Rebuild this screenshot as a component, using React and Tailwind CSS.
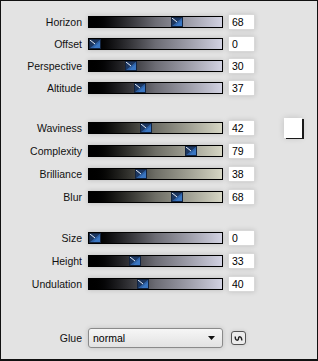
import React from "react";

const font = { fontFamily: '"Liberation Sans", Arial, sans-serif' };

function Thumb() {
  return (
    <svg width="12" height="10" viewBox="0 0 12 10" className="block">
      <rect x="0" y="0" width="12" height="10" fill="#2f62a6" />
      <polygon points="0,0 12,0 0,10" fill="#1c365f" />
      <polygon points="12,2 12,10 3,10" fill="#3a76c2" />
      <line x1="1" y1="1" x2="6" y2="5" stroke="#e6eefa" strokeWidth="1" />
      <rect x="0.5" y="0.5" width="11" height="9" fill="none" stroke="#13243f" strokeWidth="1" />
    </svg>
  );
}

function Slider({ value, beige }) {
  const grad = beige
    ? "bg-linear-to-r from-black via-[#6e6e66] to-[#d6d6c4]"
    : "bg-linear-to-r from-black via-[#6c6c74] to-[#d2d2e2]";
  return (
    <div
      className={`relative ml-[6px] h-3 w-[135px] border border-black shadow-[0_0_5px_rgba(0,0,0,0.18)] ${grad}`}
    >
      <div className="absolute top-0" style={{ left: Math.round((value / 100) * 121) }}>
        <Thumb />
      </div>
    </div>
  );
}

function Row({ label, value, beige, extra }) {
  return (
    <div className="flex h-4 items-center">
      <div className="w-[81px] text-right text-[10.5px] leading-none text-[#111]" style={font}>
        {label}
      </div>
      <Slider value={value} beige={beige} />
      <div
        className="ml-[5px] flex h-4 w-[27px] items-center border border-[#d8d8d8] bg-white pl-[3px] text-[10.5px] leading-none text-black shadow-[0_0_5px_rgba(0,0,0,0.15)]"
        style={font}
      >
        {value}
      </div>
      {extra}
    </div>
  );
}

export default function App() {
  return (
    <div
      className="box-border flex h-[361px] w-[318px] flex-col border border-b-2 border-[#111] bg-[#e3e3e3] pt-[13px]"
      style={font}
    >
      <div className="flex flex-col gap-[6px]">
        <Row label="Horizon" value={68} />
        <Row label="Offset" value={0} />
        <Row label="Perspective" value={30} />
        <Row label="Altitude" value={37} />
      </div>
      <div className="mt-[24px] flex flex-col gap-[7px]">
        <Row
          label="Waviness"
          value={42}
          beige
          extra={
            <div className="ml-[29px] h-[20px] w-[18px] bg-white shadow-[2px_1px_0_#1a1a1a,0_0_6px_rgba(0,0,0,0.15)]" />
          }
        />
        <Row label="Complexity" value={79} beige />
        <Row label="Brilliance" value={38} beige />
        <Row label="Blur" value={68} beige />
      </div>
      <div className="mt-[25px] flex flex-col gap-[7px]">
        <Row label="Size" value={0} />
        <Row label="Height" value={33} />
        <Row label="Undulation" value={40} />
      </div>
      <div className="mt-[36px] flex h-5 items-center">
        <div className="w-[81px] text-right text-[10.5px] leading-none text-[#111]">Glue</div>
        <div className="relative ml-[6px] flex h-5 w-[135px] items-center rounded-[3px] border border-[#8a8a8a] bg-linear-to-b from-[#f6f6f6] to-[#e2e2e2] pl-[4px] text-[10.5px] leading-none text-black shadow-[0_0_5px_rgba(0,0,0,0.15)]">
          normal
          <svg width="7" height="4" viewBox="0 0 7 4" className="absolute right-[7px] top-[7px]">
            <polygon points="0,0 7,0 3.5,4" fill="#111" />
          </svg>
        </div>
        <div className="ml-[8px] flex h-[14px] w-[15px] items-center justify-center rounded-[3px] border border-[#555] bg-[#ececec] shadow-[0_0_4px_rgba(0,0,0,0.12)]">
          <svg width="9" height="7" viewBox="0 0 9 7">
            <path d="M1.2 1.5 C1.2 6 4.5 6 4.5 3.5 C4.5 1 7.8 1 7.8 5.5" fill="none" stroke="#222" strokeWidth="1.4" />
          </svg>
        </div>
      </div>
    </div>
  );
}
